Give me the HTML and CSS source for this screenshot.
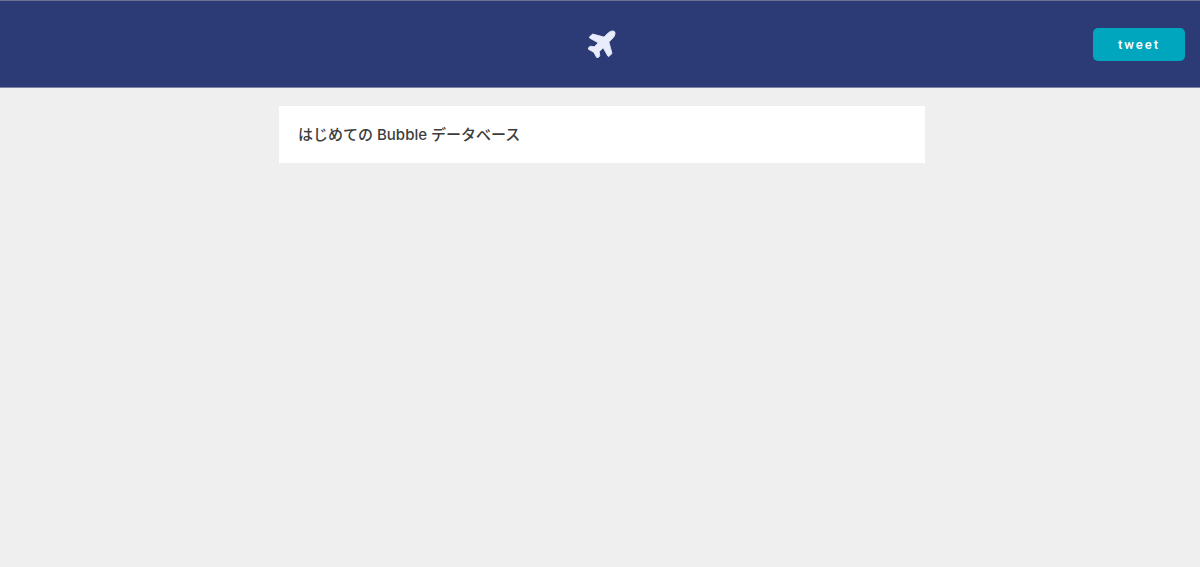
FILE: index.html
```html
<!DOCTYPE html>
<html lang="ja">
<head>
  <meta charset="UTF-8" />
  <meta name="viewport" content="width=device-width, initial-scale=1.0"/>
  <title>はじめての Bubble データベース</title>
  <link rel="stylesheet" href="styles.css">
</head>
<body>
  <header class="top-bar">
    <svg class="logo" viewBox="0 0 576 576" aria-hidden="true">
      <path transform="rotate(-45 288 288) translate(0 32)" d="M480 192H365.71L260.61 8.06A16.014 16.014 0 0 0 246.71 0h-65.5c-10.63 0-18.3 10.17-15.38 20.39L214.86 192H112l-43.2-57.6c-3.02-4.03-7.77-6.4-12.8-6.4H16.01C5.6 128-2.04 137.78.49 147.88L32 256 .49 364.12C-2.04 374.22 5.6 384 16.01 384H56c5.04 0 9.78-2.37 12.8-6.4L112 320h102.86l-49.03 171.6c-2.92 10.22 4.75 20.4 15.38 20.4h65.5c5.74 0 11.04-3.08 13.89-8.06L365.71 320H480c35.35 0 96-28.65 96-64s-60.65-64-96-64z"/>
    </svg>
    <button class="tweet-btn" type="button">tweet</button>
  </header>

  <main class="content">
    <div class="title-card">
      <h1>はじめての Bubble データベース</h1>
    </div>
  </main>
</body>
</html>
```

FILE: styles.css
```css
html, body {
  height: 100%;
}

body {
  margin: 0;
  background-color: #efefef;
  font-family: Inter, "Noto Sans CJK JP", sans-serif;
  color: #3d3d3d;
}

.top-bar {
  display: flex;
  align-items: center;
  height: 88px;
  box-sizing: border-box;
  padding: 1px 15px 0 588px;
  background-color: #2c3a76;
  border-top: 1px solid #6b7390;
  border-bottom: 1px solid #7d84a3;
}

.logo {
  width: 31px;
  height: 31px;
  margin-bottom: 5px;
  fill: #e9edfb;
  stroke: #e9edfb;
  stroke-width: 14;
  stroke-linejoin: round;
}

.tweet-btn {
  margin-left: auto;
  width: 92px;
  height: 33px;
  padding: 0;
  border: none;
  border-radius: 5px;
  background-color: #00a6bd;
  color: white;
  font-family: Roboto, sans-serif;
  font-size: 13px;
  font-weight: 500;
  letter-spacing: 2px;
  cursor: pointer;
}

.content {
  padding: 18px 275px 0 279px;
}

.title-card {
  display: flex;
  align-items: center;
  height: 57px;
  padding: 0 19px 3px;
  box-sizing: border-box;
  background-color: white;
}

h1 {
  margin: 0;
  font-size: 15px;
  font-weight: 500;
}
```
